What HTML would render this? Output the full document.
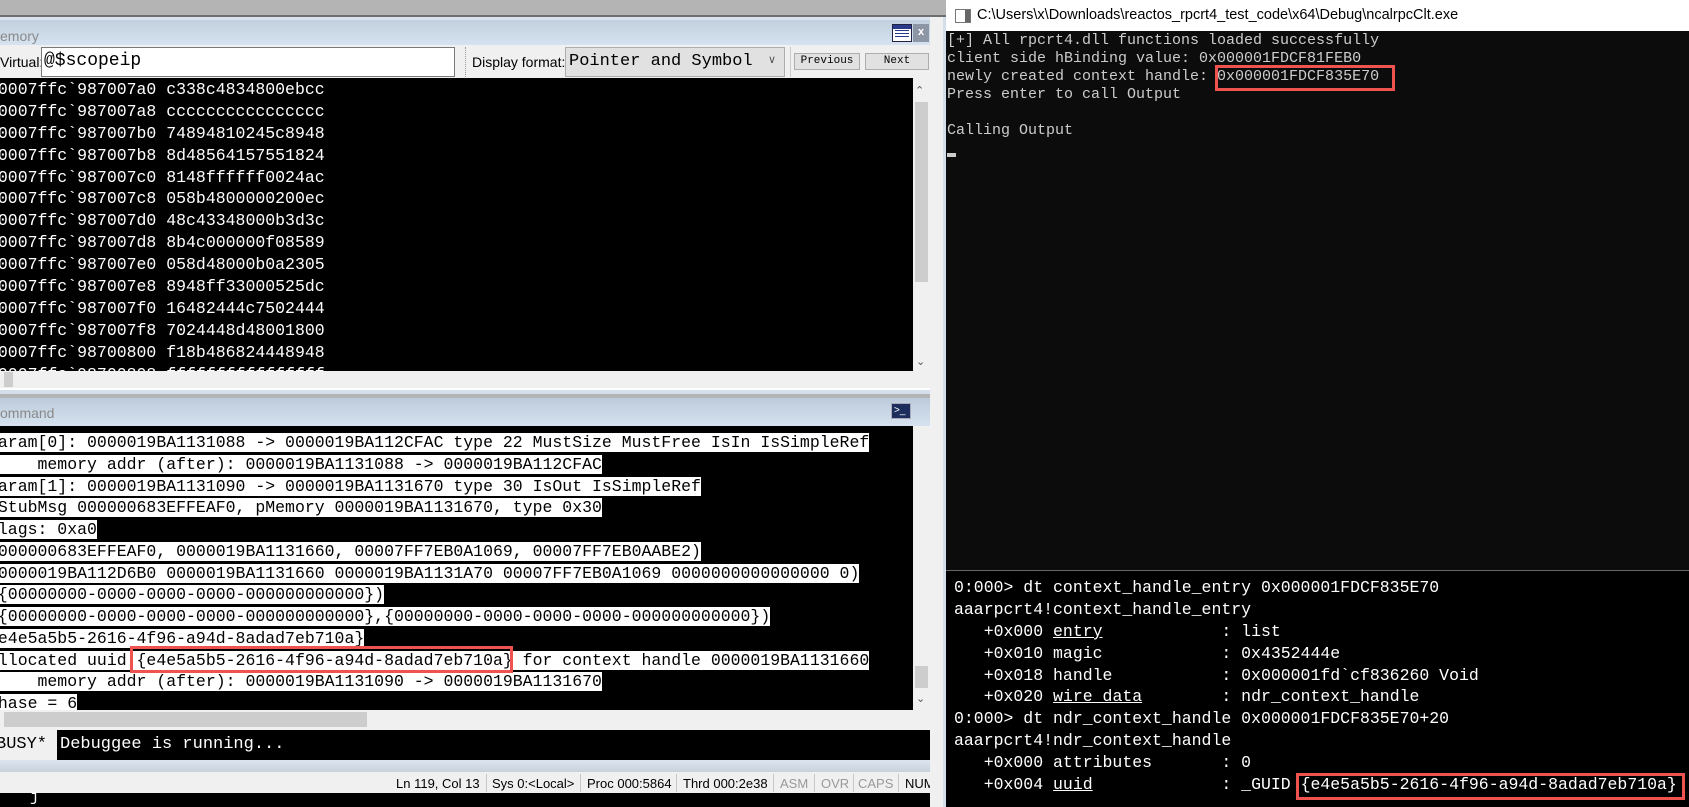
<!DOCTYPE html>
<html><head><meta charset="utf-8"><style>
*{margin:0;padding:0;box-sizing:border-box}
body{width:1689px;height:807px;overflow:hidden;background:#000;position:relative;font-family:"Liberation Sans",sans-serif}
.a{position:absolute}
.m{font-family:"Liberation Mono",monospace;font-size:16.5px;white-space:pre;line-height:22px}
.blk{font-family:"Liberation Mono",monospace;font-size:16.5px;white-space:normal}
.blk div{white-space:pre}
.mem div{color:#fff;height:21.9px;line-height:21.9px}
.cmd div{height:21.75px;line-height:21.75px}
.cmd span{background:#fff;color:#000}
.con{font-family:"Liberation Mono",monospace;font-size:15px;color:#cccccc;white-space:pre;line-height:18px}
.rb div{color:#fff;height:21.9px;line-height:21.9px}
.sb{font-size:13px;color:#000;top:776px}
.sep{position:absolute;top:774px;width:1px;height:18px;background:#c8c8c8}
</style></head><body>
<div class="a" style="left:0;top:0;width:946px;height:16px;background:#b4b4b4"></div>
<div class="a" style="left:0;top:15px;width:946px;height:2px;background:#6e6e6e"></div>
<div class="a" style="left:0;top:17px;width:946px;height:3px;background:#d9e3ef"></div>
<div class="a" style="left:0;top:20px;width:930px;height:25px;background:linear-gradient(#c2d0de,#d6e2ef)"></div>
<div class="a" style="left:0;top:28px;font-size:14px;color:#8a8a8a">emory</div>
<div class="a" style="left:892px;top:24px;width:20px;height:18px;background:#fff;border:1px solid #224;"><div style="height:4px;background:#2a3a8a"></div><div style="margin:1px 2px;height:9px;background:repeating-linear-gradient(#2a3a8a 0 1px,#fff 1px 3px)"></div></div>
<div class="a" style="left:913px;top:24px;width:16px;height:18px;background:#8c96a4;color:#fff;font-size:11px;text-align:center;line-height:17px;font-weight:bold">x</div>
<div class="a" style="left:0;top:45px;width:930px;height:33px;background:#f0f0f0"></div>
<div class="a" style="left:0;top:54px;font-size:14px;color:#000">Virtual:</div>
<div class="a" style="left:41px;top:47px;width:414px;height:30px;background:#fff;border:1px solid #7a7a7a"></div>
<div class="a m" style="left:44px;top:50px;font-size:18px;color:#000">@$scopeip</div>
<div class="a" style="left:465px;top:47px;width:0;height:30px;border-left:1px dotted #999"></div>
<div class="a" style="left:472px;top:54px;font-size:14px">Display format:</div>
<div class="a" style="left:565px;top:47px;width:220px;height:30px;background:#e1e1e1;border:1px solid #adadad"></div>
<div class="a m" style="left:569px;top:51px;font-size:17px;color:#000">Pointer and Symbol</div>
<div class="a" style="left:768px;top:53px;font-size:11px;color:#555">&#8744;</div>
<div class="a" style="left:790px;top:47px;width:1px;height:30px;background:#ccc"></div>
<div class="a" style="left:794px;top:53px;width:66px;height:17px;background:#e1e1e1;border:1px solid #adadad;font-family:'Liberation Mono',monospace;font-size:11px;text-align:center;line-height:15px">Previous</div>
<div class="a" style="left:865px;top:53px;width:64px;height:17px;background:#e1e1e1;border:1px solid #adadad;font-family:'Liberation Mono',monospace;font-size:11px;text-align:center;line-height:15px">Next</div>
<div class="a" style="left:0;top:78px;width:913px;height:293px;background:#000;overflow:hidden"><div class="blk mem" style="position:absolute;left:-12px;top:1px"><div>00007ffc`987007a0 c338c4834800ebcc</div><div>00007ffc`987007a8 cccccccccccccccc</div><div>00007ffc`987007b0 74894810245c8948</div><div>00007ffc`987007b8 8d48564157551824</div><div>00007ffc`987007c0 8148ffffff0024ac</div><div>00007ffc`987007c8 058b4800000200ec</div><div>00007ffc`987007d0 48c43348000b3d3c</div><div>00007ffc`987007d8 8b4c000000f08589</div><div>00007ffc`987007e0 058d48000b0a2305</div><div>00007ffc`987007e8 8948ff33000525dc</div><div>00007ffc`987007f0 16482444c7502444</div><div>00007ffc`987007f8 7024448d48001800</div><div>00007ffc`98700800 f18b486824448948</div><div>00007ffc`98700808 ffffffffffffffff</div></div></div>
<div class="a" style="left:913px;top:78px;width:17px;height:293px;background:#f0f0f0"></div>
<div class="a" style="left:915px;top:84px;font-size:11px;color:#555">&#8963;</div>
<div class="a" style="left:915px;top:102px;width:13px;height:180px;background:#cdcdcd"></div>
<div class="a" style="left:916px;top:355px;font-size:11px;color:#555">&#8964;</div>
<div class="a" style="left:0;top:371px;width:930px;height:17px;background:#f0f0f0"></div>
<div class="a" style="left:4px;top:372px;width:9px;height:15px;background:#cdcdcd"></div>
<div class="a" style="left:0;top:388px;width:930px;height:2px;background:#fff"></div>
<div class="a" style="left:0;top:390px;width:930px;height:4px;background:#d5dfec"></div>
<div class="a" style="left:0;top:394px;width:930px;height:4px;background:#b4b4b4"></div>
<div class="a" style="left:0;top:398px;width:930px;height:28px;background:linear-gradient(#bccbdb,#d6e2ef)"></div>
<div class="a" style="left:0;top:405px;font-size:14px;color:#8a8a8a">ommand</div>
<div class="a" style="left:891px;top:403px;width:20px;height:16px;background:#1d2e5e;border:1px solid #aab;color:#fff;font-size:10px;line-height:13px;padding-left:2px">&gt;_</div>
<div class="a" style="left:0;top:426px;width:913px;height:284px;background:#000;overflow:hidden"><div class="blk cmd" style="position:absolute;left:-12px;top:6px"><div><span>param[0]: 0000019BA1131088 -&gt; 0000019BA112CFAC type 22 MustSize MustFree IsIn IsSimpleRef</span></div><div><span>     memory addr (after): 0000019BA1131088 -&gt; 0000019BA112CFAC</span></div><div><span>param[1]: 0000019BA1131090 -&gt; 0000019BA1131670 type 30 IsOut IsSimpleRef</span></div><div><span> StubMsg 000000683EFFEAF0, pMemory 0000019BA1131670, type 0x30</span></div><div><span>flags: 0xa0</span></div><div><span>(000000683EFFEAF0, 0000019BA1131660, 00007FF7EB0A1069, 00007FF7EB0AABE2)</span></div><div><span>(0000019BA112D6B0 0000019BA1131660 0000019BA1131A70 00007FF7EB0A1069 0000000000000000 0)</span></div><div><span> {00000000-0000-0000-0000-000000000000})</span></div><div><span> {00000000-0000-0000-0000-000000000000},{00000000-0000-0000-0000-000000000000})</span></div><div><span>{e4e5a5b5-2616-4f96-a94d-8adad7eb710a}</span></div><div><span>allocated uuid {e4e5a5b5-2616-4f96-a94d-8adad7eb710a} for context handle 0000019BA1131660</span></div><div><span>     memory addr (after): 0000019BA1131090 -&gt; 0000019BA1131670</span></div><div><span>phase = 6</span></div></div></div>
<div class="a" style="left:130px;top:646px;width:383px;height:27px;border:3px solid #ef5350"></div>
<div class="a" style="left:913px;top:426px;width:17px;height:284px;background:#f0f0f0"></div>
<div class="a" style="left:915px;top:666px;width:13px;height:22px;background:#cdcdcd"></div>
<div class="a" style="left:916px;top:692px;font-size:11px;color:#555">&#8964;</div>
<div class="a" style="left:0;top:710px;width:930px;height:20px;background:#f0f0f0"></div>
<div class="a" style="left:4px;top:712px;width:363px;height:15px;background:#cdcdcd"></div>
<div class="a" style="left:0;top:730px;width:57px;height:30px;background:#f0f0f0"></div>
<div class="a m" style="left:-4px;top:734px;font-size:17px;color:#000">BUSY*</div>
<div class="a" style="left:57px;top:730px;width:873px;height:30px;background:#000"></div>
<div class="a m" style="left:60px;top:734px;font-size:17px;color:#fff">Debuggee is running...</div>
<div class="a" style="left:0;top:760px;width:930px;height:12px;background:linear-gradient(#dde6f0,#c8d0da)"></div>
<div class="a" style="left:0;top:772px;width:930px;height:21px;background:#f0f0f0"></div>
<div class="a sb" style="left:396px">Ln 119, Col 13</div><div class="sep" style="left:486px"></div>
<div class="a sb" style="left:492px">Sys 0:&lt;Local&gt;</div><div class="sep" style="left:580px"></div>
<div class="a sb" style="left:587px">Proc 000:5864</div><div class="sep" style="left:676px"></div>
<div class="a sb" style="left:683px">Thrd 000:2e38</div><div class="sep" style="left:773px"></div>
<div class="a sb" style="left:780px;color:#999">ASM</div><div class="sep" style="left:814px"></div>
<div class="a sb" style="left:821px;color:#999">OVR</div><div class="sep" style="left:853px"></div>
<div class="a sb" style="left:858px;color:#999">CAPS</div><div class="sep" style="left:898px"></div>
<div class="a sb" style="left:905px">NUM</div>
<div class="a" style="left:0;top:793px;width:930px;height:14px;background:#000;overflow:hidden"><div class="m" style="position:absolute;left:30px;top:-6px;color:#fff;font-size:15px">j</div></div>
<div class="a" style="left:930px;top:17px;width:16px;height:790px;background:#f0f0f0;border-right:3px solid #d5dfec"></div>
<div class="a" style="left:946px;top:0;width:743px;height:31px;background:#fff"></div>
<div class="a" style="left:955px;top:9px;width:16px;height:14px;border:1px solid #777;background:linear-gradient(90deg,#fff 0 9px,#666 9px)"></div>
<div class="a" style="left:977px;top:7px;font-size:14.5px;color:#000">C:\Users\x\Downloads\reactos_rpcrt4_test_code\x64\Debug\ncalrpcClt.exe</div>
<div class="a" style="left:946px;top:31px;width:743px;height:539px;background:#0c0c0c"></div>
<div class="a con" style="left:947px;top:32px">[+] All rpcrt4.dll functions loaded successfully
client side hBinding value: 0x000001FDCF81FEB0
newly created context handle: 0x000001FDCF835E70
Press enter to call Output

Calling Output</div>
<div class="a" style="left:1215px;top:65px;width:180px;height:26px;border:3px solid #ef5350"></div>
<div class="a" style="left:947px;top:153px;width:9px;height:4px;background:#ccc"></div>
<div class="a" style="left:946px;top:570px;width:743px;height:1px;background:#666"></div>
<div class="a" style="left:946px;top:571px;width:743px;height:236px;background:#000;overflow:hidden"><div class="blk rb" style="position:absolute;left:8px;top:6px"><div>0:000&gt; dt context_handle_entry 0x000001FDCF835E70</div><div>aaarpcrt4!context_handle_entry</div><div>   +0x000 <u>entry</u>            : list</div><div>   +0x010 magic            : 0x4352444e</div><div>   +0x018 handle           : 0x000001fd`cf836260 Void</div><div>   +0x020 <u>wire_data</u>        : ndr_context_handle</div><div>0:000&gt; dt ndr_context_handle 0x000001FDCF835E70+20</div><div>aaarpcrt4!ndr_context_handle</div><div>   +0x000 attributes       : 0</div><div>   +0x004 <u>uuid</u>             : _GUID {e4e5a5b5-2616-4f96-a94d-8adad7eb710a}</div></div></div>
<div class="a" style="left:1296px;top:773px;width:389px;height:27px;border:3px solid #ef5350"></div>
</body></html>
